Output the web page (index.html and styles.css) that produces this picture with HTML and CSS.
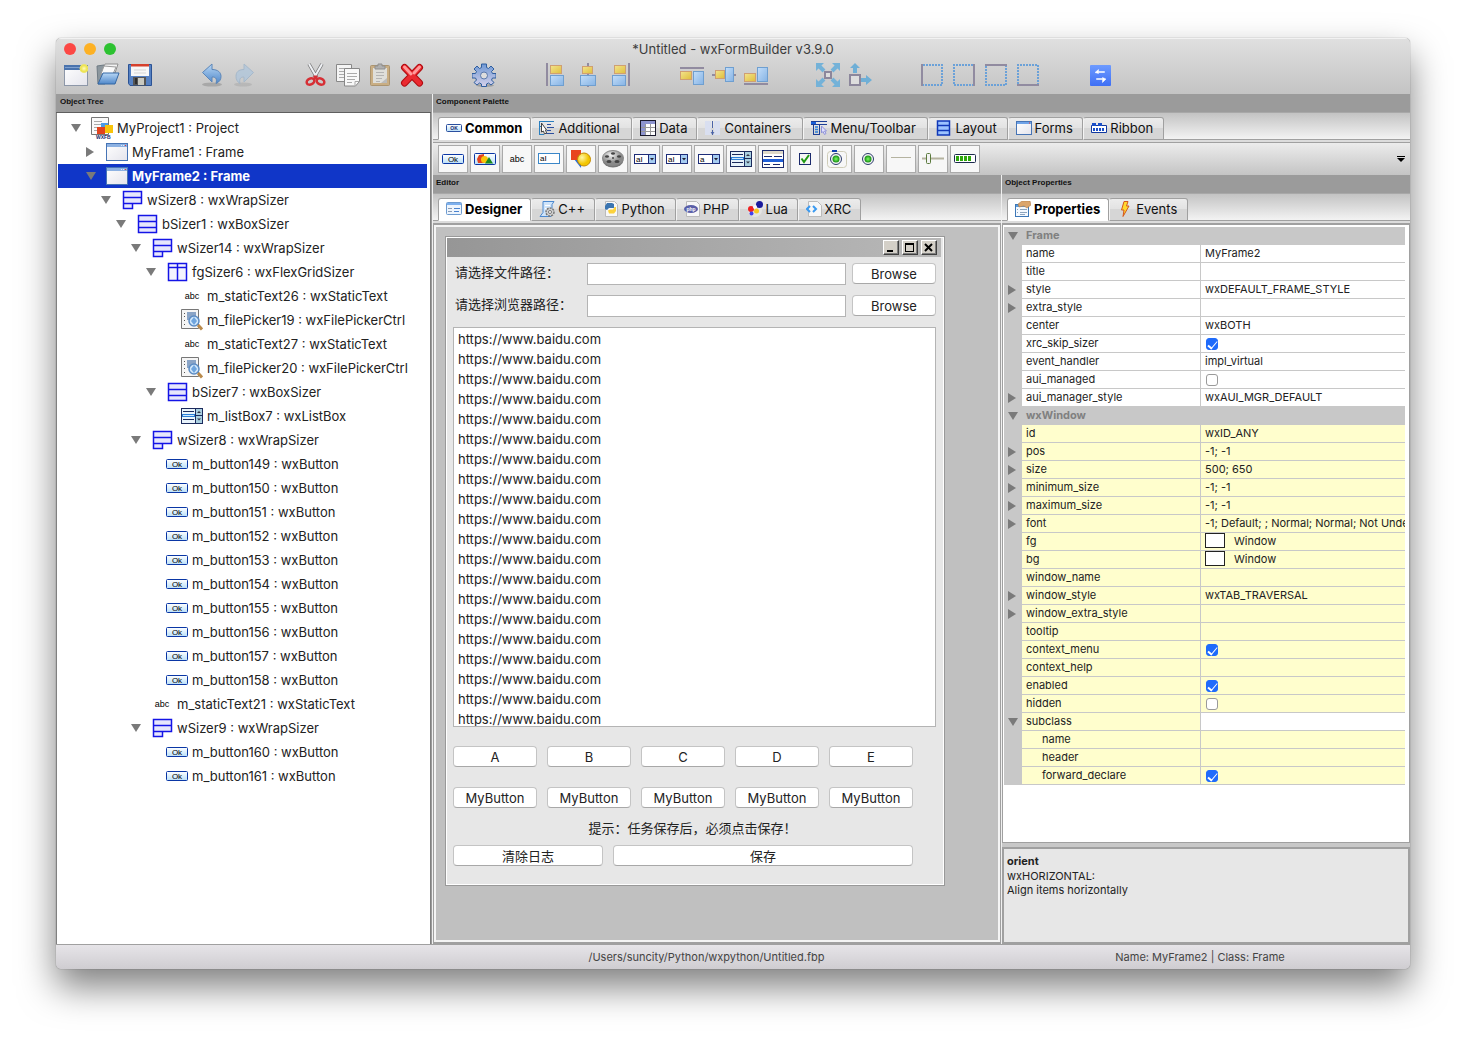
FILE: index.html
```
<!DOCTYPE html>
<html lang="en">
<head>
<meta charset="utf-8">
<title>*Untitled - wxFormBuilder v3.9.0</title>
<link rel="stylesheet" href="styles.css">
</head>
<body>
<svg class="sprite" aria-hidden="true">
  <defs>
    <linearGradient id="g-blue" x1="0" y1="0" x2="0" y2="1"><stop offset="0" stop-color="#b9d8f6"/><stop offset="1" stop-color="#4f87c9"/></linearGradient>
    <linearGradient id="g-pale" x1="0" y1="0" x2="1" y2="1"><stop offset="0" stop-color="#c3defa"/><stop offset="1" stop-color="#86b3e4"/></linearGradient>
    <linearGradient id="g-gold" x1="0" y1="0" x2="1" y2="1"><stop offset="0" stop-color="#f3e48d"/><stop offset="1" stop-color="#dfbe3c"/></linearGradient>
    <linearGradient id="g-gear" x1="0" y1="0" x2="0" y2="1"><stop offset="0" stop-color="#6f98d4"/><stop offset="1" stop-color="#d6d2ea"/></linearGradient>
    <linearGradient id="g-btn" x1="0" y1="0" x2="0" y2="1"><stop offset="0" stop-color="#ffffff"/><stop offset="1" stop-color="#b9dff8"/></linearGradient>
    <linearGradient id="g-win" x1="0" y1="0" x2="1" y2="1"><stop offset="0" stop-color="#ffffff"/><stop offset="1" stop-color="#e4e4ec"/></linearGradient>
    <linearGradient id="g-swap" x1="0" y1="0" x2="0" y2="1"><stop offset="0" stop-color="#6d9bff"/><stop offset="1" stop-color="#3e6ff5"/></linearGradient>
    <radialGradient id="g-sun"><stop offset="0" stop-color="#fffbc0"/><stop offset="1" stop-color="#e8dc2c"/></radialGradient>
    <radialGradient id="g-green"><stop offset="0" stop-color="#7dff62"/><stop offset="1" stop-color="#138a12"/></radialGradient>
    <radialGradient id="g-ball" cx=".35" cy=".35"><stop offset="0" stop-color="#fff7a8"/><stop offset="1" stop-color="#f2c500"/></radialGradient>
    <radialGradient id="g-reel" cx=".4" cy=".3"><stop offset="0" stop-color="#f4f4f4"/><stop offset="1" stop-color="#8a8a8a"/></radialGradient>
  </defs>

  <symbol id="i-new" viewBox="0 0 24 24"><rect x=".5" y="2.500" width="23" height="20" fill="url(#g-win)" stroke="#8d97a8"/><path d="M0 2h24v5H0z" fill="#4a73ad"/><path d="M1 4h20v1H1z" fill="#7ea0cf"/><circle cx="20" cy="5.500" r="4" fill="url(#g-sun)" stroke="#efe76a"/></symbol>
  <symbol id="i-open" viewBox="0 0 24 24"><path d="M1 3l7-1 1 2v17H2z" fill="#8c979e" stroke="#6f7b84"/><path d="M6 8L9 1l13 0-3 9z" fill="#f3f3f3" stroke="#8f8f8f"/><path d="M5 11L8 3l12 1-3 7z" fill="#fafafa" stroke="#9b9b9b"/><path d="M2 21l5-11h16l-4 11z" fill="url(#g-blue)" stroke="#3568a5"/></symbol>
  <symbol id="i-save" viewBox="0 0 24 24"><path d="M.5 1.500h23v21H2l-1.500-2z" fill="#5681c2" stroke="#2b5294"/><path d="M3 1h18v12H3z" fill="#f7f7f7"/><path d="M3 1h18v2.500H3z" fill="#d6402c"/><path d="M6 7h12M6 10h12" stroke="#d5d5d5"/><rect x="5" y="14" width="13" height="8.500" fill="#555"/><rect x="10" y="15" width="6" height="7" fill="#c9c9c0"/><path d="M7 15h2v6H7z" fill="#2d2d2d"/></symbol>
  <symbol id="i-undo" viewBox="0 0 24 24"><ellipse cx="12" cy="21.500" rx="10" ry="2" fill="#888" opacity=".5"/><path d="M2.500 9.500L12 1v5.500c6 0 9 3 9 7 0 3-1.500 5.500-5 7 1-4 .5-6.500-4-6.500v5z" fill="url(#g-blue)" stroke="#5c86b8"/></symbol>
  <symbol id="i-redo" viewBox="0 0 24 24"><ellipse cx="11" cy="21.500" rx="9" ry="2" fill="#999" opacity=".35"/><path d="M21.500 9.500L12 1v5.500c-6 0-8 3-8 7 0 3 1.500 5.500 4 7-1-4 0-6.500 4-6.500v5z" fill="#afc6dc" stroke="#9ab2c9" opacity=".75"/></symbol>
  <symbol id="i-cut" viewBox="0 0 24 24"><path d="M5 1l8 14M18 1l-8 14" stroke="#777" stroke-width="3.500"/><path d="M5 1l8 14M18 1l-8 14" stroke="#eef0f4" stroke-width="2"/><g fill="none" stroke="#d62f35" stroke-width="2.500"><ellipse cx="6.500" cy="18.500" rx="4" ry="3" transform="rotate(-25 6.500 18.500)"/><ellipse cx="16.500" cy="18.500" rx="4" ry="3" transform="rotate(25 16.500 18.500)"/></g><path d="M11.500 12.500v4" stroke="#d62f35" stroke-width="4"/></symbol>
  <symbol id="i-copy" viewBox="0 0 24 24"><path d="M.5 1.500h15v17H.5z" fill="#f4f4f4" stroke="#888"/><path d="M3 5.500h9M3 8.500h8M3 11.500h5M3 14.500h5" stroke="#aaa"/><path d="M8.500 5.500h15v13l-4 4.500h-11z" fill="#f8f8f8" stroke="#888"/><path d="M11 10.500h10M11 13.500h10M11 16.500h8M11 19.500h5M23 18.500h-4v4" stroke="#aaa" fill="none"/></symbol>
  <symbol id="i-paste" viewBox="0 0 24 24"><rect x="2.500" y="2.500" width="19" height="20" rx="1" fill="#c9ae84" stroke="#ab9470"/><path d="M5 5h14v15H5z" fill="#dfdfdb"/><path d="M8 9.500h8M8 12.500h8M8 15.500h6M8 18.500h4" stroke="#b4b4b4"/><path d="M7 6V3h3V1h4v2h3v3z" fill="#b0b0b0" stroke="#8f8f8f"/><path d="M19 15v5h-6z" fill="#bbb"/></symbol>
  <symbol id="i-delete" viewBox="0 0 24 24"><path d="M4.500 4.500l15 15.500M19.500 4.500L4.500 20" stroke="#b00b10" stroke-width="7" stroke-linecap="round"/><path d="M4.500 4.500l15 15.500M19.500 4.500L4.500 20" stroke="#ea2a30" stroke-width="5" stroke-linecap="round"/><path d="M4.500 4l6.500 7M19.500 4l-5.500 6" stroke="#ff9a9a" stroke-width="3" stroke-linecap="round"/></symbol>
  <symbol id="i-gear" viewBox="0 0 24 24"><ellipse cx="13" cy="22.500" rx="9" ry="1.500" fill="#777" opacity=".5"/><path d="M9.500 1h5v3.500l2 1L19 3l3 3-2.500 2.500 1 2H24v4.500h-3.500l-1 2L22 19.500 19 22l-2.500-2-2 1v2.500h-5V21l-2-1L5 22l-3-2.500L4.500 17l-1-2H0v-4.500h3.500l1-2L2 6l3-3 2.500 2.500 2-1z" fill="url(#g-gear)" stroke="#2f5e9f"/><circle cx="12" cy="12.500" r="3.500" fill="#ddd" stroke="#5a78ab"/></symbol>
  <symbol id="i-al" viewBox="0 0 24 24"><path d="M3 0v23" stroke="#918ba0" stroke-width="2"/><rect x="6.500" y="2.500" width="11" height="8" fill="url(#g-gold)" stroke="#cf9f72"/><rect x="6.500" y="12.500" width="13" height="10" fill="url(#g-pale)" stroke="#6f9fd0"/></symbol>
  <symbol id="i-ac" viewBox="0 0 24 24"><path d="M12 0v24" stroke="#918ba0" stroke-width="2"/><rect x="6.500" y="3.500" width="10" height="7" fill="url(#g-gold)" stroke="#cf9f72"/><rect x="4.500" y="12.500" width="15" height="10" fill="url(#g-pale)" stroke="#6f9fd0"/></symbol>
  <symbol id="i-ar" viewBox="0 0 24 24"><path d="M21 0v23" stroke="#918ba0" stroke-width="2"/><rect x="6.500" y="2.500" width="11" height="8" fill="url(#g-gold)" stroke="#cf9f72"/><rect x="4.500" y="12.500" width="13" height="10" fill="url(#g-pale)" stroke="#6f9fd0"/></symbol>
  <symbol id="i-at" viewBox="0 0 24 24"><path d="M0 5h24" stroke="#918ba0" stroke-width="2"/><rect x=".5" y="8.500" width="11" height="8" fill="url(#g-gold)" stroke="#cf9f72"/><rect x="13.500" y="8.500" width="10" height="13" fill="url(#g-pale)" stroke="#6f9fd0"/></symbol>
  <symbol id="i-am" viewBox="0 0 24 24"><path d="M0 12h24" stroke="#918ba0" stroke-width="2"/><rect x="3.500" y="7.500" width="9" height="8" fill="url(#g-gold)" stroke="#cf9f72"/><rect x="13.500" y="4.500" width="8" height="14" fill="url(#g-pale)" stroke="#6f9fd0"/></symbol>
  <symbol id="i-ab" viewBox="0 0 24 24"><path d="M0 21h24" stroke="#918ba0" stroke-width="2"/><rect x=".5" y="10.500" width="11" height="8" fill="url(#g-gold)" stroke="#cf9f72"/><rect x="13.500" y="4.500" width="10" height="14" fill="url(#g-pale)" stroke="#6f9fd0"/></symbol>
  <symbol id="i-expand" viewBox="0 0 24 24"><path d="M2 2l6 6M22 2l-6 6M2 22l6-6M22 22l-6-6" stroke="#74b2d8" stroke-width="4"/><path d="M0 0h8L0 8zM24 0v8l-8-8zM0 24v-8l8 8zM24 24h-8l8-8z" fill="#74b2d8"/><rect x="9" y="9" width="6" height="6" fill="#ddd" stroke="#8c879c" stroke-width="2"/></symbol>
  <symbol id="i-stretch" viewBox="0 0 24 24"><path d="M7 0l5 5H9v5H5V5H2zM24 17l-6-5v3h-5v4h5v3z" fill="#6fafd6"/><rect x="2" y="12" width="10" height="10" fill="#ddd" stroke="#8c879c" stroke-width="2"/></symbol>
  <symbol id="i-bl" viewBox="0 0 24 24"><path d="M3 2h19v20H3" fill="none" stroke="#6ba1d8" stroke-width="2" stroke-dasharray="2 1"/><path d="M2 1v22" stroke="#918ba0" stroke-width="2"/></symbol>
  <symbol id="i-br" viewBox="0 0 24 24"><path d="M21 2H2v20h19" fill="none" stroke="#6ba1d8" stroke-width="2" stroke-dasharray="2 1"/><path d="M22 1v22" stroke="#918ba0" stroke-width="2"/></symbol>
  <symbol id="i-bt" viewBox="0 0 24 24"><path d="M2 3v19h20V3" fill="none" stroke="#6ba1d8" stroke-width="2" stroke-dasharray="2 1"/><path d="M1 2h22" stroke="#918ba0" stroke-width="2"/></symbol>
  <symbol id="i-bb" viewBox="0 0 24 24"><path d="M2 21V2h20v19" fill="none" stroke="#6ba1d8" stroke-width="2" stroke-dasharray="2 1"/><path d="M1 22h22" stroke="#918ba0" stroke-width="2"/></symbol>
  <symbol id="i-swap" viewBox="0 0 24 24"><rect x="2" y="2" width="21" height="21" rx="1" fill="url(#g-swap)"/><path d="M10.500 6.500L7 9.500l3.500 1V9.500h6v-1h-6zM14.500 19.500l3.500-3.500-3.500-1.500v1H8.500v1h6z" fill="#fff" stroke="#fff" stroke-width=".5"/></symbol>

  <symbol id="i-project" viewBox="0 0 22 22"><path d="M.5.500h17v17H.5z" fill="#fafafa" stroke="#777"/><path d="M3 4.500h8M3 7.500h12M3 10.500h4M3 13.500h3" stroke="#aaa"/><rect x="10" y="6" width="7" height="7" fill="#4b9be6"/><rect x="6" y="10" width="8" height="7" fill="#e2431e"/><rect x="14" y="8" width="8" height="8" fill="#f8c40a"/><text x="5" y="22" class="glyph tiny">WXFB</text></symbol>
  <symbol id="i-frame" viewBox="0 0 22 18"><rect x=".5" y=".5" width="21" height="17" fill="url(#g-win)" stroke="#4674b5"/><path d="M1 1h20v3H1z" fill="#8cb1e2"/><path d="M15 2.500h1M17 2.500h1" stroke="#dde9f8"/><path d="M19 2.500h1" stroke="#e33"/></symbol>
  <symbol id="i-wrap" viewBox="0 0 22 20"><path d="M2.500 1.500h18v6h-18zM2.500 7.500h18v6h-18zM2.500 13.500h9v5h-9z" fill="#e6e6fc" stroke="#1414e6" stroke-width="1.500"/></symbol>
  <symbol id="i-box" viewBox="0 0 22 20"><path d="M2.500 1.500h18v17h-18zM2.500 7.500h18M2.500 13.500h18" fill="#e6e6fc" stroke="#1414e6" stroke-width="1.500"/></symbol>
  <symbol id="i-grid" viewBox="0 0 22 20"><path d="M2.500 1.500h18v17h-18zM2.500 5.500h18M11.500 1v18" fill="#f3f3fe" stroke="#1414e6" stroke-width="1.500"/></symbol>
  <symbol id="i-abc" viewBox="0 0 22 16"><text x="11" y="11" text-anchor="middle" class="glyph abc">abc</text></symbol>
  <symbol id="i-picker" viewBox="0 0 22 22"><path d="M.5.500h17v19H.5z" fill="#f5f5f5" stroke="#777"/><path d="M3 4.500h1M3 7.500h1M3 11.500h1M3 15.500h1" stroke="#555"/><path d="M6 3h9v8H6z" fill="#8aa4c6"/><circle cx="13" cy="12" r="5" fill="#cfe6fa" stroke="#5c8cc4" stroke-width="1.500"/><path d="M13 8l3 4-3 4-3-4z" fill="#6fa5de"/><path d="M17 16l4 4.500" stroke="#b98a4c" stroke-width="3"/></symbol>
  <symbol id="i-list" viewBox="0 0 22 16"><rect x=".5" y=".5" width="21" height="15" fill="#e8f3fb" stroke="#1b2a5c"/><path d="M2 3.500h11M2 11.500h11" stroke="#1b2a5c"/><path d="M1 6h13v3H1z" fill="#2b7fd8"/><path d="M2 7.500h11" stroke="#cfe6fa"/><path d="M14.500 1v14M14 7.500h8" stroke="#1b2a5c"/><path d="M15 1h6v6h-6zM15 8h6v7h-6z" fill="#a9cfe0"/><path d="M16 5h4l-2-2zM16 10.500h4l-2 2z" fill="#334"/></symbol>
  <symbol id="i-ok" viewBox="0 0 22 16"><rect x=".5" y="3.500" width="21" height="9" rx="1" fill="url(#g-btn)" stroke="#0a36a5"/><text x="11" y="11" text-anchor="middle" class="glyph ok">Ok</text></symbol>
  <symbol id="i-bitmap" viewBox="0 0 22 16"><rect x=".5" y="2.500" width="21" height="11" rx="1" fill="url(#g-btn)" stroke="#0a36a5"/><path d="M3 8l2-4 5-1v9H4z" fill="#e2431e"/><circle cx="10.500" cy="8.500" r="3.500" fill="#f8c40a"/><path d="M15 6l4 6.500h-8z" fill="#1d8a1d"/></symbol>
  <symbol id="i-text" viewBox="0 0 22 16"><rect x=".5" y="2.500" width="21" height="10" fill="#fff" stroke="#3a86c8"/><text x="2" y="10" class="glyph ok">aI</text></symbol>
  <symbol id="i-shapes" viewBox="0 0 22 18"><path d="M4 9l8-2-1 11z" fill="#2a6fd6"/><rect x="1" y="0" width="10" height="10" fill="#e8431e"/><circle cx="14" cy="9.500" r="6.500" fill="url(#g-ball)" stroke="#c58b00"/></symbol>
  <symbol id="i-reel" viewBox="0 0 22 18"><ellipse cx="11" cy="10" rx="10.500" ry="7.500" fill="#777"/><ellipse cx="11" cy="8" rx="10.500" ry="7.500" fill="url(#g-reel)" stroke="#888"/><g fill="#444"><ellipse cx="11" cy="3.500" rx="2" ry="1.300"/><ellipse cx="5" cy="6.500" rx="2" ry="1.300"/><ellipse cx="17" cy="6.500" rx="2" ry="1.300"/><ellipse cx="7" cy="11.500" rx="2.500" ry="1.500"/><ellipse cx="15" cy="11.500" rx="2.500" ry="1.500"/><circle cx="11" cy="8" r="1"/></g></symbol>
  <symbol id="i-combo" viewBox="0 0 22 16"><rect x=".5" y="3.500" width="21" height="9" fill="#fff" stroke="#1d2c78"/><path d="M15 4h6v8h-6z" fill="#a6cdf2"/><path d="M14.500 3v10" stroke="#1d2c78"/><path d="M16 7h4l-2 2.500z" fill="#223"/><text x="2" y="11" class="glyph ok">aI</text></symbol>
  <symbol id="i-choice" viewBox="0 0 22 16"><rect x=".5" y="3.500" width="21" height="9" fill="#fff" stroke="#1d2c78"/><path d="M15 4h6v8h-6z" fill="#a6cdf2"/><path d="M14.500 3v10" stroke="#1d2c78"/><path d="M16 7h4l-2 2.500z" fill="#223"/><text x="2" y="11" class="glyph ok">a</text></symbol>
  <symbol id="i-listctrl" viewBox="0 0 22 18"><rect x=".5" y=".5" width="21" height="17" fill="#fff" stroke="#1b2a6c"/><path d="M1 1h20v3H1z" fill="#ddd8c8"/><path d="M2 6.500h8M12 6.500h8M2 14.500h6M11 14.500h7" stroke="#1b2a6c"/><path d="M1 9h20v3H1z" fill="#1f5fd8"/></symbol>
  <symbol id="i-check" viewBox="0 0 22 16"><rect x="5.500" y="2.500" width="11" height="11" fill="#f6f6f6" stroke="#1b2a6c"/><path d="M7.500 7.500l2.500 3.500 5-7" fill="none" stroke="#1f9a12" stroke-width="2"/></symbol>
  <symbol id="i-radiobox" viewBox="0 0 22 20"><rect x="1.500" y="2.500" width="19" height="16" rx="3" fill="none" stroke="#cfcdb8"/><path d="M6 1h5v2H6z" fill="#1140b0"/><circle cx="10" cy="10" r="5.500" fill="#f4f4f4" stroke="#2c3b6c"/><circle cx="10" cy="10" r="3.500" fill="url(#g-green)"/></symbol>
  <symbol id="i-radio" viewBox="0 0 22 16"><circle cx="10" cy="8" r="5.500" fill="#f4f4f4" stroke="#2c3b6c"/><circle cx="10" cy="8" r="3.500" fill="url(#g-green)"/></symbol>
  <symbol id="i-line" viewBox="0 0 22 16"><path d="M1 6.500h20" stroke="#b5b3a0"/></symbol>
  <symbol id="i-slider" viewBox="0 0 22 16"><path d="M0 7.500h22" stroke="#b5b3a0" stroke-width="2"/><rect x="4.500" y="2.500" width="4" height="10" rx="1" fill="#f3f3f3" stroke="#5a7a3c"/></symbol>
  <symbol id="i-gauge" viewBox="0 0 22 16"><rect x=".5" y="3.500" width="21" height="8" rx="1" fill="#fff" stroke="#1b2a4c"/><path d="M2 5h3v5H2zM6 5h3v5H6zM10 5h3v5h-3zM14 5h3v5h-3z" fill="#2fa80c"/></symbol>

  <symbol id="t-ok" viewBox="0 0 16 16"><rect x=".5" y="4.500" width="15" height="7" rx="1" fill="url(#g-btn)" stroke="#2a4f9f"/><text x="8" y="10" text-anchor="middle" class="glyph tiny">OK</text></symbol>
  <symbol id="t-add" viewBox="0 0 16 16"><path d="M.5 1v14M1 1.500h14M1 6.500h3M1 14.500h4" stroke="#2b7fbf" fill="none"/><path d="M8 4.500h4M8 7.500h7M8 10.500h4M7 13.500h8" stroke="#2b4f9f"/><path d="M2.500 3v9l2-1 1 3 2-1-1-3h1z" stroke="#444" fill="#fff"/></symbol>
  <symbol id="t-data" viewBox="0 0 16 16"><rect x=".5" y=".5" width="15" height="15" fill="#fff" stroke="#1a1a2c"/><path d="M1 1h14v3H1zM1 4h4v11H1z" fill="#8d94cf"/><path d="M5.500 4v11M10.500 4v11M1 7.500h14M1 11.500h14" stroke="#999"/></symbol>
  <symbol id="t-cont" viewBox="0 0 16 16"><path d="M0 1h6v14H0zM9 1h6v14H9z" fill="#d9dff0"/><path d="M7.500 1v7M7.500 10v5M6 12l1.500 2L9 12" stroke="#4a63a8" fill="none"/></symbol>
  <symbol id="t-menu" viewBox="0 0 16 16"><path d="M0 1h5v3H0z" fill="#1a5fd8"/><path d="M0 1.500h16M0 4.500h16" stroke="#1d3f95"/><path d="M2.500 4v11M2 14.500h7M8.500 5v10" stroke="#1d3f95"/><path d="M4 7h3M4 9.500h3M4 12h3" stroke="#2b7fd8" stroke-width="1.500"/><path d="M10.500 6v7l1.500-1.500 1.500 3 1.500-1-1.500-2.500h2z" fill="#dfe0ff" stroke="#8f93d8"/></symbol>
  <symbol id="t-layout" viewBox="0 0 16 16"><path d="M1.500 1h12v14h-12zM1.500 5.500h12M1.500 10.500h12" fill="#9cc3ff" stroke="#1038b8" stroke-width="1.500"/></symbol>
  <symbol id="t-form" viewBox="0 0 16 16"><rect x=".5" y="1.500" width="15" height="13" fill="url(#g-win)" stroke="#4674b5"/><path d="M1 2h14v2H1z" fill="#6fa3e8"/><path d="M13 3h1" stroke="#e33"/></symbol>
  <symbol id="t-ribbon" viewBox="0 0 16 16"><path d="M.5 5.500h15v7H.5z" fill="#fff" stroke="#1038a0"/><path d="M1 3h4v3H1zM7 3h4v3H7z" fill="#1a4fc8"/><path d="M2 9.500h12" stroke="#1a4fc8" stroke-width="3" stroke-dasharray="2 1"/></symbol>
  <symbol id="t-designer" viewBox="0 0 16 16"><rect x=".5" y="1.500" width="15" height="12" rx="1" fill="#eef5fd" stroke="#6d9bd0"/><path d="M1 2h14v2H1z" fill="#7db0ee"/><path d="M2 7.500h4M2 10.500h4" stroke="#8a9bb5"/><path d="M8 7.500h6M8 10.500h5" stroke="#4a83cf"/></symbol>
  <symbol id="t-cpp" viewBox="0 0 16 16"><path d="M4 .5h11l-2 3v9l-1 3H1l3-4z" fill="#cfe4fa" stroke="#4c89cf"/><path d="M6 4.500h5M6 7.500h4" stroke="#fff"/><circle cx="11" cy="11" r="4" fill="#d0d0d0" stroke="#777" stroke-width="1.500" stroke-dasharray="2 1"/><circle cx="11" cy="11" r="1.500" fill="#fff" stroke="#777"/></symbol>
  <symbol id="t-py" viewBox="0 0 16 16"><path d="M2.500.500h9l3 3v12h-12z" fill="#f7f7f7" stroke="#bbb"/><path d="M2 8V5l2-3h5l2 1v4H6L4 9z" fill="#3a74b0"/><path d="M13 6v4l-2 2.500H6l-1-3 2-1h3l1.500-2.500z" fill="#fcd23c"/></symbol>
  <symbol id="t-php" viewBox="0 0 16 16"><path d="M2.500.500h10l3 3v12h-13z" fill="#f7f7f7" stroke="#bbb"/><ellipse cx="7" cy="8" rx="7" ry="4" fill="#5a5fa8"/><text x="7" y="10" text-anchor="middle" class="glyph tiny light">php</text></symbol>
  <symbol id="t-lua" viewBox="0 0 16 16"><circle cx="8" cy="9" r="7" fill="#e4e4e4"/><circle cx="4" cy="8" r="3" fill="#f02020"/><circle cx="12.500" cy="3.500" r="3.500" fill="#1a1a9c"/><circle cx="8" cy="6" r="2" fill="#f7f7ff"/><circle cx="9.500" cy="10" r="2.500" fill="#f8c820"/><circle cx="4.500" cy="12.500" r="2" fill="#4040f0"/></symbol>
  <symbol id="t-xrc" viewBox="0 0 16 16"><path d="M2.500.500h9l4 4v11h-13z" fill="#f7f7f7" stroke="#bbb"/><path d="M4 5L1 8l3 3M7 5l3 3-3 3" fill="none" stroke="#3b9af0" stroke-width="2"/></symbol>
  <symbol id="t-prop" viewBox="0 0 16 16"><rect x=".5" y="3.500" width="13" height="12" fill="#f4f9ff" stroke="#3d78b8"/><path d="M1 4h12v2H1z" fill="#5a9ada"/><path d="M2 8.500h1M2 11.500h1M5 8.500h7M5 11.500h7M5 13.500h5" stroke="#8ea5be"/><path d="M3 3l4-3h8l1 4-4 3-3-2-5 1z" fill="#dba56c" stroke="#a87440" stroke-width=".5"/></symbol>
  <symbol id="t-event" viewBox="0 0 16 16"><path d="M7 .5h4L9.500 5H12L6 15.500 7 9H4.500z" fill="#ffd92e" stroke="#d4581c"/></symbol>
</svg>

<main class="window">
  <header class="titlebar">
    <div class="caption">
      <div class="lights"><button class="light close" aria-label="Close"></button><button class="light min" aria-label="Minimize"></button><button class="light zoom" aria-label="Zoom"></button></div>
      <h1>*Untitled - wxFormBuilder v3.9.0</h1>
    </div>
    <nav class="tools" aria-label="Toolbar">
      <div class="group"><button aria-label="New"><svg><use href="#i-new"/></svg></button><button aria-label="Open"><svg><use href="#i-open"/></svg></button><button aria-label="Save"><svg><use href="#i-save"/></svg></button></div>
      <div class="group"><button aria-label="Undo"><svg><use href="#i-undo"/></svg></button><button aria-label="Redo"><svg><use href="#i-redo"/></svg></button></div>
      <div class="group"><button aria-label="Cut"><svg><use href="#i-cut"/></svg></button><button aria-label="Copy"><svg><use href="#i-copy"/></svg></button><button aria-label="Paste"><svg><use href="#i-paste"/></svg></button><button aria-label="Delete"><svg><use href="#i-delete"/></svg></button></div>
      <div class="group"><button aria-label="Generate code"><svg><use href="#i-gear"/></svg></button></div>
      <div class="group"><button aria-label="Align left"><svg><use href="#i-al"/></svg></button><button aria-label="Align center"><svg><use href="#i-ac"/></svg></button><button aria-label="Align right"><svg><use href="#i-ar"/></svg></button></div>
      <div class="group"><button aria-label="Align top"><svg><use href="#i-at"/></svg></button><button aria-label="Align middle"><svg><use href="#i-am"/></svg></button><button aria-label="Align bottom"><svg><use href="#i-ab"/></svg></button></div>
      <div class="group"><button aria-label="Expand"><svg><use href="#i-expand"/></svg></button><button aria-label="Stretch"><svg><use href="#i-stretch"/></svg></button></div>
      <div class="group"><button aria-label="Left border"><svg><use href="#i-bl"/></svg></button><button aria-label="Right border"><svg><use href="#i-br"/></svg></button><button aria-label="Top border"><svg><use href="#i-bt"/></svg></button><button aria-label="Bottom border"><svg><use href="#i-bb"/></svg></button></div>
      <div class="group"><button aria-label="Swap"><svg><use href="#i-swap"/></svg></button></div>
    </nav>
  </header>

  <div class="workspace">
    <section class="tree-pane">
      <h2 class="pane-title">Object Tree</h2>
      <ul class="tree">
        <li class="row d0"><button class="tw open" aria-label="Collapse"></button><svg><use href="#i-project"/></svg>MyProject1 : Project</li>
        <li class="row d1"><button class="tw" aria-label="Expand"></button><svg><use href="#i-frame"/></svg>MyFrame1 : Frame</li>
        <li class="row d1 selected"><button class="tw open" aria-label="Collapse"></button><svg><use href="#i-frame"/></svg>MyFrame2 : Frame</li>
        <li class="row d2"><button class="tw open" aria-label="Collapse"></button><svg><use href="#i-wrap"/></svg>wSizer8 : wxWrapSizer</li>
        <li class="row d3"><button class="tw open" aria-label="Collapse"></button><svg><use href="#i-box"/></svg>bSizer1 : wxBoxSizer</li>
        <li class="row d4"><button class="tw open" aria-label="Collapse"></button><svg><use href="#i-wrap"/></svg>wSizer14 : wxWrapSizer</li>
        <li class="row d5"><button class="tw open" aria-label="Collapse"></button><svg><use href="#i-grid"/></svg>fgSizer6 : wxFlexGridSizer</li>
        <li class="row d6 leaf"><svg><use href="#i-abc"/></svg>m_staticText26 : wxStaticText</li>
        <li class="row d6 leaf"><svg><use href="#i-picker"/></svg>m_filePicker19 : wxFilePickerCtrl</li>
        <li class="row d6 leaf"><svg><use href="#i-abc"/></svg>m_staticText27 : wxStaticText</li>
        <li class="row d6 leaf"><svg><use href="#i-picker"/></svg>m_filePicker20 : wxFilePickerCtrl</li>
        <li class="row d5"><button class="tw open" aria-label="Collapse"></button><svg><use href="#i-box"/></svg>bSizer7 : wxBoxSizer</li>
        <li class="row d6 leaf"><svg><use href="#i-list"/></svg>m_listBox7 : wxListBox</li>
        <li class="row d4"><button class="tw open" aria-label="Collapse"></button><svg><use href="#i-wrap"/></svg>wSizer8 : wxWrapSizer</li>
        <li class="row d5 leaf"><svg><use href="#i-ok"/></svg>m_button149 : wxButton</li>
        <li class="row d5 leaf"><svg><use href="#i-ok"/></svg>m_button150 : wxButton</li>
        <li class="row d5 leaf"><svg><use href="#i-ok"/></svg>m_button151 : wxButton</li>
        <li class="row d5 leaf"><svg><use href="#i-ok"/></svg>m_button152 : wxButton</li>
        <li class="row d5 leaf"><svg><use href="#i-ok"/></svg>m_button153 : wxButton</li>
        <li class="row d5 leaf"><svg><use href="#i-ok"/></svg>m_button154 : wxButton</li>
        <li class="row d5 leaf"><svg><use href="#i-ok"/></svg>m_button155 : wxButton</li>
        <li class="row d5 leaf"><svg><use href="#i-ok"/></svg>m_button156 : wxButton</li>
        <li class="row d5 leaf"><svg><use href="#i-ok"/></svg>m_button157 : wxButton</li>
        <li class="row d5 leaf"><svg><use href="#i-ok"/></svg>m_button158 : wxButton</li>
        <li class="row d4 leaf"><svg><use href="#i-abc"/></svg>m_staticText21 : wxStaticText</li>
        <li class="row d4"><button class="tw open" aria-label="Collapse"></button><svg><use href="#i-wrap"/></svg>wSizer9 : wxWrapSizer</li>
        <li class="row d5 leaf"><svg><use href="#i-ok"/></svg>m_button160 : wxButton</li>
        <li class="row d5 leaf"><svg><use href="#i-ok"/></svg>m_button161 : wxButton</li>
      </ul>
    </section>

    <div class="right">
      <section class="palette">
        <h2 class="pane-title">Component Palette</h2>
        <div class="tabs" role="tablist">
          <button class="tab active" role="tab"><svg><use href="#t-ok"/></svg><span data-label="Common">Common</span></button>
          <button class="tab" role="tab"><svg><use href="#t-add"/></svg><span data-label="Additional">Additional</span></button>
          <button class="tab" role="tab"><svg><use href="#t-data"/></svg><span data-label="Data">Data</span></button>
          <button class="tab" role="tab"><svg><use href="#t-cont"/></svg><span data-label="Containers">Containers</span></button>
          <button class="tab" role="tab"><svg><use href="#t-menu"/></svg><span data-label="Menu/Toolbar">Menu/Toolbar</span></button>
          <button class="tab" role="tab"><svg><use href="#t-layout"/></svg><span data-label="Layout">Layout</span></button>
          <button class="tab" role="tab"><svg><use href="#t-form"/></svg><span data-label="Forms">Forms</span></button>
          <button class="tab" role="tab"><svg><use href="#t-ribbon"/></svg><span data-label="Ribbon">Ribbon</span></button>
        </div>
        <div class="widgets">
          <button aria-label="Button"><svg><use href="#i-ok"/></svg></button>
          <button aria-label="Bitmap button"><svg><use href="#i-bitmap"/></svg></button>
          <button aria-label="Static text"><svg><use href="#i-abc"/></svg></button>
          <button aria-label="Text control"><svg><use href="#i-text"/></svg></button>
          <button aria-label="Bitmap"><svg><use href="#i-shapes"/></svg></button>
          <button aria-label="Animation"><svg><use href="#i-reel"/></svg></button>
          <button aria-label="Combo box"><svg><use href="#i-combo"/></svg></button>
          <button aria-label="Bitmap combo box"><svg><use href="#i-combo"/></svg></button>
          <button aria-label="Choice"><svg><use href="#i-choice"/></svg></button>
          <button aria-label="List box"><svg><use href="#i-list"/></svg></button>
          <button aria-label="List control"><svg><use href="#i-listctrl"/></svg></button>
          <button aria-label="Check box"><svg><use href="#i-check"/></svg></button>
          <button aria-label="Radio box"><svg><use href="#i-radiobox"/></svg></button>
          <button aria-label="Radio button"><svg><use href="#i-radio"/></svg></button>
          <button aria-label="Static line"><svg><use href="#i-line"/></svg></button>
          <button aria-label="Slider"><svg><use href="#i-slider"/></svg></button>
          <button aria-label="Gauge"><svg><use href="#i-gauge"/></svg></button>
          <button class="overflow" aria-label="More"><svg viewBox="0 0 8 7"><path d="M0 0h8v1H0zM0 2h8L4 6z"/></svg></button>
        </div>
      </section>

      <div class="lower">
        <section class="editor">
          <h2 class="pane-title">Editor</h2>
          <div class="tabs" role="tablist">
            <button class="tab active" role="tab"><svg><use href="#t-designer"/></svg><span data-label="Designer">Designer</span></button>
            <button class="tab" role="tab"><svg><use href="#t-cpp"/></svg><span data-label="C++">C++</span></button>
            <button class="tab" role="tab"><svg><use href="#t-py"/></svg><span data-label="Python">Python</span></button>
            <button class="tab" role="tab"><svg><use href="#t-php"/></svg><span data-label="PHP">PHP</span></button>
            <button class="tab" role="tab"><svg><use href="#t-lua"/></svg><span data-label="Lua">Lua</span></button>
            <button class="tab" role="tab"><svg><use href="#t-xrc"/></svg><span data-label="XRC">XRC</span></button>
          </div>
          <div class="canvas">
            <div class="form-window">
              <div class="form-title">
                <button aria-label="Minimize"><svg viewBox="0 0 12 11"><path d="M2 8h6v2H2z"/></svg></button>
                <button aria-label="Maximize"><svg viewBox="0 0 12 11"><path d="M1 1h9v9H1zM2 3v6h7V3z" fill-rule="evenodd"/></svg></button>
                <button aria-label="Close"><svg viewBox="0 0 12 11"><path d="M2 2l7 7M9 2L2 9" stroke="#000" stroke-width="2"/></svg></button>
              </div>
              <div class="form-body">
                <div class="pickers">
                  <label for="file">请选择文件路径：</label><input id="file" type="text"><button class="btn">Browse</button>
                  <label for="browser">请选择浏览器路径：</label><input id="browser" type="text"><button class="btn">Browse</button>
                </div>
                <select class="urls" size="20" aria-label="URLs">
                  <option>https://www.baidu.com</option><option>https://www.baidu.com</option><option>https://www.baidu.com</option><option>https://www.baidu.com</option><option>https://www.baidu.com</option>
                  <option>https://www.baidu.com</option><option>https://www.baidu.com</option><option>https://www.baidu.com</option><option>https://www.baidu.com</option><option>https://www.baidu.com</option>
                  <option>https://www.baidu.com</option><option>https://www.baidu.com</option><option>https://www.baidu.com</option><option>https://www.baidu.com</option><option>https://www.baidu.com</option>
                  <option>https://www.baidu.com</option><option>https://www.baidu.com</option><option>https://www.baidu.com</option><option>https://www.baidu.com</option><option>https://www.baidu.com</option>
                </select>
                <div class="btn-grid">
                  <button class="btn">A</button><button class="btn">B</button><button class="btn">C</button><button class="btn">D</button><button class="btn">E</button>
                  <button class="btn">MyButton</button><button class="btn">MyButton</button><button class="btn">MyButton</button><button class="btn">MyButton</button><button class="btn">MyButton</button>
                </div>
                <p class="hint">提示：任务保存后，必须点击保存！</p>
                <div class="actions"><button class="btn">清除日志</button><button class="btn">保存</button></div>
              </div>
            </div>
          </div>
        </section>

        <section class="props">
          <h2 class="pane-title">Object Properties</h2>
          <div class="tabs" role="tablist">
            <button class="tab active" role="tab"><svg><use href="#t-prop"/></svg><span data-label="Properties">Properties</span></button>
            <button class="tab" role="tab"><svg><use href="#t-event"/></svg><span data-label="Events">Events</span></button>
          </div>
          <div class="grid-box">
            <table class="grid">
              <colgroup><col class="c-gutter"><col class="c-name"><col></colgroup>
              <tbody>
                <tr class="cat"><td><button class="tw open" aria-label="Collapse"></button></td><th colspan="2">Frame</th></tr>
                <tr><td></td><th>name</th><td>MyFrame2</td></tr>
                <tr><td></td><th>title</th><td></td></tr>
                <tr><td><button class="tw" aria-label="Expand"></button></td><th>style</th><td>wxDEFAULT_FRAME_STYLE</td></tr>
                <tr><td><button class="tw" aria-label="Expand"></button></td><th>extra_style</th><td></td></tr>
                <tr><td></td><th>center</th><td>wxBOTH</td></tr>
                <tr><td></td><th><label for="p-skip">xrc_skip_sizer</label></th><td><input type="checkbox" id="p-skip" checked></td></tr>
                <tr><td></td><th>event_handler</th><td>impl_virtual</td></tr>
                <tr><td></td><th><label for="p-aui">aui_managed</label></th><td><input type="checkbox" id="p-aui"></td></tr>
                <tr><td><button class="tw" aria-label="Expand"></button></td><th>aui_manager_style</th><td>wxAUI_MGR_DEFAULT</td></tr>
                <tr class="cat"><td><button class="tw open" aria-label="Collapse"></button></td><th colspan="2">wxWindow</th></tr>
              </tbody>
              <tbody class="tint">
                <tr><td></td><th>id</th><td>wxID_ANY</td></tr>
                <tr><td><button class="tw" aria-label="Expand"></button></td><th>pos</th><td>-1; -1</td></tr>
                <tr><td><button class="tw" aria-label="Expand"></button></td><th>size</th><td>500; 650</td></tr>
                <tr><td><button class="tw" aria-label="Expand"></button></td><th>minimum_size</th><td>-1; -1</td></tr>
                <tr><td><button class="tw" aria-label="Expand"></button></td><th>maximum_size</th><td>-1; -1</td></tr>
                <tr><td><button class="tw" aria-label="Expand"></button></td><th>font</th><td>-1; Default; ; Normal; Normal; Not Underlined</td></tr>
                <tr><td></td><th>fg</th><td><span class="swatch"></span>Window</td></tr>
                <tr><td></td><th>bg</th><td><span class="swatch"></span>Window</td></tr>
                <tr><td></td><th>window_name</th><td></td></tr>
                <tr><td><button class="tw" aria-label="Expand"></button></td><th>window_style</th><td>wxTAB_TRAVERSAL</td></tr>
                <tr><td><button class="tw" aria-label="Expand"></button></td><th>window_extra_style</th><td></td></tr>
                <tr><td></td><th>tooltip</th><td></td></tr>
                <tr><td></td><th><label for="p-menu">context_menu</label></th><td><input type="checkbox" id="p-menu" checked></td></tr>
                <tr><td></td><th>context_help</th><td></td></tr>
                <tr><td></td><th><label for="p-enabled">enabled</label></th><td><input type="checkbox" id="p-enabled" checked></td></tr>
                <tr><td></td><th><label for="p-hidden">hidden</label></th><td><input type="checkbox" id="p-hidden"></td></tr>
                <tr class="blank"><td><button class="tw open" aria-label="Collapse"></button></td><th>subclass</th><td></td></tr>
                <tr class="child"><td></td><th>name</th><td></td></tr>
                <tr class="child"><td></td><th>header</th><td></td></tr>
                <tr class="child"><td></td><th><label for="p-fwd">forward_declare</label></th><td><input type="checkbox" id="p-fwd" checked></td></tr>
              </tbody>
            </table>
          </div>
          <div class="help"><h3>orient</h3><p>wxHORIZONTAL:<br>Align items horizontally</p></div>
        </section>
      </div>
    </div>
  </div>

  <footer class="status"><span></span><span>/Users/suncity/Python/wxpython/Untitled.fbp</span><span class="info">Name: MyFrame2 | Class: Frame</span></footer>
</main>
</body>
</html>
```
FILE: styles.css
```
* { box-sizing: border-box; }

body {
  margin: 0;
  padding: 38px 56px 74px;
  min-height: 100vh;
  display: flex;
  background: #fff;
  color: #222;
  font: 13px/20px Inter, "Noto Sans CJK SC", sans-serif;
}

h1, h2, h3, p, ul { margin: 0; padding: 0; }
button, input, select { font: inherit; color: inherit; margin: 0; padding: 0; border: 0; background: none; }
svg { display: block; flex: none; }
.sprite { position: absolute; width: 0; height: 0; visibility: hidden; }

.glyph { font-family: "Liberation Sans", sans-serif; fill: #000; }
.glyph.abc { font-size: 9px; }
.glyph.ok { font-size: 8px; }
.glyph.tiny { font-size: 5px; font-weight: bold; fill: #14286e; }
.glyph.light { fill: #fff; }

.window {
  flex: 1;
  min-width: 0;
  display: flex;
  flex-direction: column;
  border-radius: 5px;
  overflow: hidden;
  background: #c8c8c8;
  box-shadow: 0 0 1px rgba(0, 0, 0, .6), 0 18px 36px rgba(0, 0, 0, .5);
}

/* Title bar and main toolbar */
.titlebar { height: 56px; background: linear-gradient(#dfdfdf, #c4c4c4); border-top: 1px solid #f2f2f2; }
.caption { display: grid; grid-template-columns: 80px 1fr 80px; align-items: center; height: 20px; }
.caption h1 { font-size: 13px; font-weight: 400; line-height: 20px; text-align: center; color: #3c3c3c; }
.lights { display: flex; gap: 8px; padding-left: 8px; }
.light { width: 12px; height: 12px; border-radius: 50%; }
.light.close { background: #fc4845; }
.light.min { background: #fdb124; }
.light.zoom { background: #2dc231; }
.tools { display: flex; gap: 48px; padding: 4px 8px 0; }
.group { display: flex; gap: 8px; }
.group svg { width: 24px; height: 24px; }

/* Panes */
.workspace { flex: 1; display: grid; grid-template-columns: 376px minmax(0, 1fr); }
.pane-title {
  height: 19px;
  padding: 3px 4px 0 3px;
  font: bold 8px/10px "Liberation Sans", sans-serif;
  color: #111;
  background: #9b9b9b;
  border-bottom: 1px solid #a8a8a8;
}
.tree-pane { display: flex; flex-direction: column; border-right: 1px solid #9b9b9b; }
.tree-pane .pane-title { padding-left: 4px; border-color: #5f5f5f; }
.tree { flex: 1; list-style: none; padding: 3px 3px 3px 1px; background: #fff; border: solid #808080; border-width: 0 1px; }
.row { display: flex; align-items: center; height: 24px; white-space: nowrap; gap: 4px; }
.row svg { width: 22px; height: 22px; }
.row.selected { background: #1036c8; color: #fff; font-weight: 700; }
.d0 { padding-left: 13px; }
.d1 { padding-left: 28px; }
.d2 { padding-left: 43px; }
.d3 { padding-left: 58px; }
.d4 { padding-left: 73px; }
.d5 { padding-left: 88px; }
.d6 { padding-left: 103px; }
.leaf::before { content: ""; width: 16px; }
.tw { flex: none; width: 16px; height: 12px; display: flex; align-items: center; }
.tw::before { content: ""; border: solid transparent; border-width: 5px 0 5px 8px; border-left-color: #7a7a7a; }
.tw.open::before { border-width: 8px 5px 0; border-color: #7a7a7a transparent transparent; }

.right { display: flex; flex-direction: column; border-left: 1px solid #f0f0f0; }
.lower { flex: 1; display: grid; grid-template-columns: minmax(0, 1fr) 409px; }
.editor, .props { display: flex; flex-direction: column; min-width: 0; }
.props { border-left: 1px solid #f0f0f0; }

/* Tabs */
.tabs {
  display: flex;
  align-items: flex-end;
  height: 30px;
  padding: 0 5px 2px;
  background: linear-gradient(#c3c3c3, #f3f3f3 26px);
  border-bottom: 1px solid #a0a0a0;
  box-shadow: inset 0 -2px #dcdcdc, inset 0 -3px #a0a0a0;
}
.tab {
  display: flex;
  align-items: center;
  gap: 3px;
  height: 23px;
  padding: 0 8px 2px 7px;
  border: 1px solid #a0a0a0;
  border-left-color: #f4f4f4;
  border-radius: 3px 3px 0 0;
  background: linear-gradient(#ececec, #e2e2e2 50%, #d6d6d6 50%);
  color: #111;
}
.tab.active { background: #fff; border-left-color: #a0a0a0; border-bottom-color: #fff; font-weight: 700; color: #000; }
.tab svg { width: 16px; height: 16px; }
.tab span { text-align: left; }
.tab span::after { content: attr(data-label); display: block; height: 0; overflow: hidden; visibility: hidden; font-weight: 700; }

.widgets {
  display: flex;
  align-items: center;
  gap: 2px;
  height: 32px;
  padding: 0 5px;
  background: linear-gradient(#ececec, #c4c4c4);
}
.widgets button { display: grid; place-items: center; width: 30px; height: 28px; background: #f7f7f7; border: 1px solid #aaa; }
.widgets svg { width: 22px; height: 20px; }
.widgets .overflow { width: 8px; margin-left: auto; border: 0; background: none; }
.widgets .overflow svg { width: 8px; height: 7px; }

/* Designer canvas */
.canvas { flex: 1; padding: 11px; background: #c0c0c0; border: 1px solid #a0a0a0; border-bottom-width: 2px; box-shadow: inset 0 0 0 2px #f4f4f4; }
.form-window { width: 500px; padding: 1px; background: #e7e7e7; border: 1px solid #999; box-shadow: inset 0 0 0 1px #fff; }
.form-title { display: flex; justify-content: flex-end; gap: 3px; height: 19px; margin-right: 2px; padding: 2px 4px; background: linear-gradient(90deg, #969696, #b8b8b8); }
.form-title button { width: 16px; height: 15px; padding: 1px; background: #d4d0c8; border: 1px solid; border-color: #fff #404040 #404040 #fff; box-shadow: inset -1px -1px #808080; }
.form-title svg { width: 12px; height: 11px; }
.form-body { padding: 6px 7px 18px 6px; }
.pickers { display: grid; grid-template-columns: 128px 1fr 84px; gap: 10px 6px; align-items: start; }
.pickers label { padding-left: 2px; line-height: 18px; white-space: nowrap; }
.pickers input { width: 100%; height: 22px; padding: 0 4px; background: #fff; border: 1px solid #b4b4b4; }
.btn { height: 21px; border-radius: 4px; background: #fff; border: 1px solid #c4c4c4; border-bottom-color: #a8a8a8; line-height: 18px; text-align: center; }
.urls { display: block; width: 100%; height: 400px; margin-top: 10px; padding: 3px 0 0; border: 1px solid #b4b4b4; border-radius: 0; background: #fff; overflow: hidden; scrollbar-width: none; }
.urls option { height: 20px; padding: 0 4px; line-height: 20px; }
.btn-grid { display: grid; grid-template-columns: repeat(5, 84px); gap: 20px 10px; margin-top: 19px; }
.hint { margin: 10px 4px 7px 0; text-align: center; }
.actions { display: grid; grid-template-columns: 150px 300px; gap: 10px; }

/* Property grid */
.grid-box { flex: 1; padding: 2px 4px 2px 1px; background: #fff; border: 1px solid #a0a0a0; overflow: hidden; }
.grid { width: 100%; table-layout: fixed; border-collapse: separate; border-spacing: 0; font-size: 11px; line-height: 17px; }
.c-gutter { width: 18px; }
.c-name { width: 179px; }
.grid tr { height: 18px; }
.grid th, .grid td { padding: 0 4px; font-weight: 400; text-align: left; white-space: nowrap; overflow: hidden; border-bottom: 1px solid #c8c8c8; }
.grid tr:not(.cat) th { border-right: 1px solid #c8c8c8; }
.grid .cat th { background: #c8c8c8; color: #808080; font-weight: 700; }
.tint th, .tint td { background: #fffecd; }
.tint .blank td { background: #fff; }
.grid tr td:first-child { padding: 0 0 0 4px; background: #c8c8c8; }
.grid .child th { padding-left: 20px; }
.grid .tw { width: 10px; height: 10px; }
.grid input { display: block; appearance: none; width: 12px; height: 12px; margin-left: 1px; background: #fff; border: 1px solid #9a9a9a; border-radius: 3px; }
.grid input:checked { background: #1f6bfb; border-color: #1f6bfb; }
.grid input:checked::after { content: ""; display: block; width: 4px; height: 8px; margin: 0 auto; border: solid #fff; border-width: 0 1px 2px 0; transform: rotate(40deg); }
.swatch { display: inline-block; width: 20px; height: 15px; margin-right: 9px; background: #fff; border: 1px solid #222; vertical-align: top; }
.help { height: 97px; margin-top: 4px; padding: 4px 3px; background: #e7e7e7; border: 2px solid #a0a0a0; font-size: 11px; line-height: 14px; }
.help h3 { font-size: 11px; line-height: 16px; }

.status { display: grid; grid-template-columns: 4fr 7fr 400px; height: 25px; border-top: 1px solid #a0a0a0; background: linear-gradient(#e6e4e8, #cfcdd1); font-size: 11px; line-height: 24px; text-align: center; color: #444; }
.info { padding-right: 20px; }
```
